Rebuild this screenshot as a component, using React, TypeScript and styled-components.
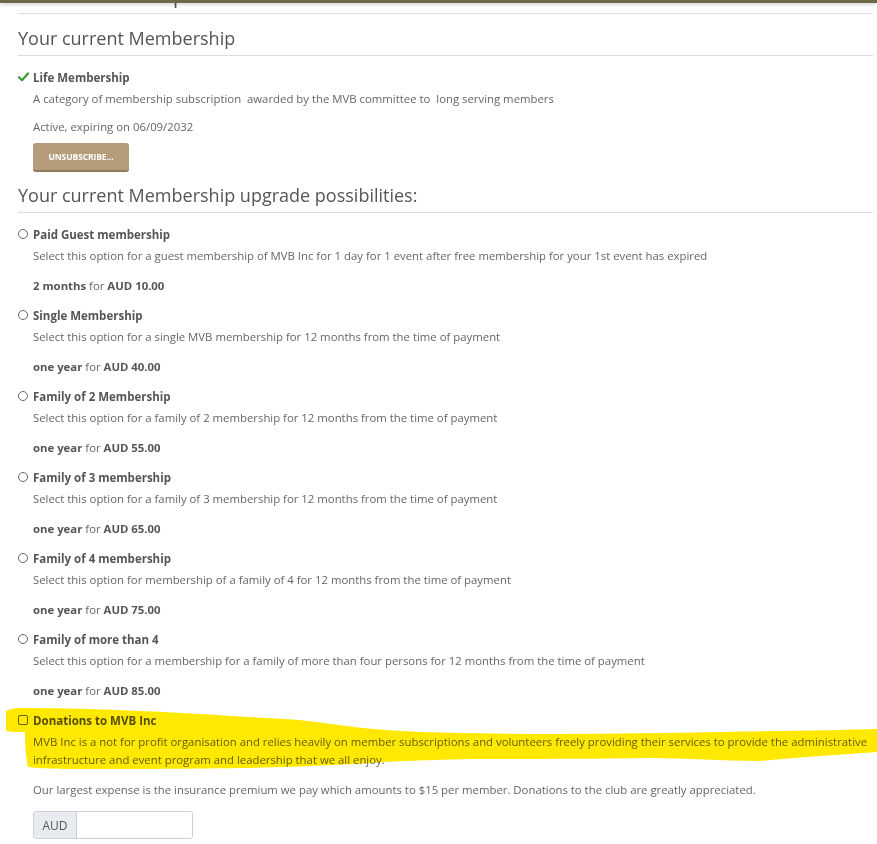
import React from "react";
import styled, { createGlobalStyle } from "styled-components";

const GlobalStyle = createGlobalStyle`
  html, body { margin: 0; padding: 0; background: #fff; }
  body {
    font-family: "Open Sans", "Liberation Sans", sans-serif;
    font-size: 11.37px;
    color: #666;
  }
  * { box-sizing: border-box; }
`;

const TopBar = styled.div`
  position: fixed;
  top: 0;
  left: 0;
  right: 0;
  height: 3px;
  background: #6d6847;
  box-shadow: 0 1px 4px rgba(0, 0, 0, 0.25);
  z-index: 5;
`;

const Page = styled.div`
  padding: 0 4px 20px 18px;
  overflow: hidden;
`;

const CutTitle = styled.h1`
  margin: -14px 0 1px 0;
  height: 28px;
  padding-top: 0;
  font-size: 20px;
  font-weight: 400;
  color: #555;
  line-height: 20px;
  border-bottom: 1px solid #ddd;
`;

const SectionHeading = styled.h2`
  margin: 0;
  padding: 11px 0 5px 0;
  font-size: 18px;
  font-weight: 400;
  line-height: 24px;
  color: #555;
  border-bottom: 1px solid #ddd;
`;

const Block = styled.div`
  position: relative;
  padding-left: 15px;
`;

const TitleRow = styled.div`
  display: flex;
  align-items: center;
  position: relative;
  height: 22px;
  font-weight: 700;
  color: #555;
  font-size: 11.5px;
  z-index: 1;
`;

const Marker = styled.span`
  position: absolute;
  left: -15px;
  top: 50%;
  transform: translateY(-50%);
  display: flex;
  align-items: center;
`;

const Radio = styled.span`
  display: block;
  width: 10px;
  height: 10px;
  border: 1px solid #666;
  border-radius: 50%;
  background: #fff;
`;

const Check = styled.span`
  display: block;
  width: 10px;
  height: 10px;
  border: 1px solid #666;
  border-radius: 2px;
  background: transparent;
`;

const Text = styled.p<{ $gap?: number }>`
  margin: 0 0 ${(p) => p.$gap ?? 0}px 0;
  line-height: 18px;
  padding: 2px 0;
`;

const Price = styled.p`
  margin: 8px 0 0 0;
  line-height: 18px;
  padding: 2px 0;
  b { font-weight: 700; color: #555; }
`;

const CurrentSection = styled.section`
  padding-top: 10px;
`;

const UpgradeList = styled.div`
  display: flex;
  flex-direction: column;
  gap: 7px;
  padding-top: 10px;
`;

const Button = styled.button`
  margin-top: 5px;
  width: 96px;
  height: 29px;
  border: none;
  border-bottom: 2px solid #8f7a5c;
  border-radius: 3px;
  background: #b59c7b;
  color: #fff;
  font-family: "Open Sans", "Liberation Sans", sans-serif;
  font-size: 8.5px;
  font-weight: 700;
  letter-spacing: -0.1px;
  text-transform: uppercase;
  cursor: pointer;
`;

const Donation = styled.div`
  position: relative;
  padding-left: 15px;
`;

const Highlight = styled.svg`
  position: absolute;
  left: -18px;
  top: -10px;
  width: 877px;
  height: 80px;
  mix-blend-mode: multiply;
  pointer-events: none;
  z-index: 2;
`;

const InputGroup = styled.div`
  display: flex;
  width: 160px;
  height: 28px;
  margin-top: 10px;
  border: 1px solid #ccd0d4;
  border-radius: 3px;
  overflow: hidden;
`;

const Addon = styled.span`
  display: flex;
  align-items: center;
  justify-content: center;
  width: 43px;
  background: #e9ecef;
  border-right: 1px solid #ccd0d4;
  color: #555;
  font-size: 12px;
`;

const Field = styled.input`
  flex: 1;
  border: none;
  outline: none;
  min-width: 0;
  font-family: inherit;
`;

const CheckMark = () => (
  <svg width="11" height="10" viewBox="0 0 11 10">
    <path d="M1 5.2 L4 8.2 L10 1.5" fill="none" stroke="#3a9a3a" strokeWidth="2.2" strokeLinecap="round" strokeLinejoin="round" />
  </svg>
);

type Option = { title: string; desc: string; term: string; price: string };

const options: Option[] = [
  {
    title: "Paid Guest membership",
    desc: "Select this option for a guest membership of MVB Inc for 1 day for 1 event after free membership for your 1st event has expired",
    term: "2 months",
    price: "AUD 10.00",
  },
  {
    title: "Single Membership",
    desc: "Select this option for a single MVB membership for 12 months from the time of payment",
    term: "one year",
    price: "AUD 40.00",
  },
  {
    title: "Family of 2 Membership",
    desc: "Select this option for a family of 2 membership for 12 months from the time of payment",
    term: "one year",
    price: "AUD 55.00",
  },
  {
    title: "Family of 3 membership",
    desc: "Select this option for a family of 3 membership for 12 months from the time of payment",
    term: "one year",
    price: "AUD 65.00",
  },
  {
    title: "Family of 4 membership",
    desc: "Select this option for membership of a family of 4 for 12 months from the time of payment",
    term: "one year",
    price: "AUD 75.00",
  },
  {
    title: "Family of more than 4",
    desc: "Select this option for a membership for a family of more than four persons for 12 months from the time of payment",
    term: "one year",
    price: "AUD 85.00",
  },
];

// highlighter stroke, in coordinates where y = page y - 700
const highlightPath =
  "M6 12 C10 10 14 9 20 9 C60 9 100 10 140 12 C190 14 230 17 300 21 C340 26 370 31 420 33 " +
  "C520 36 620 35 720 33 C790 32 840 31 877 30 L877 53 C840 56 800 58 760 62 C720 62 690 59 650 59 " +
  "C580 60 520 60 470 60 C430 61 400 62 385 63 C340 66 300 68 240 69 C180 70 120 70 80 70 " +
  "C50 70 35 69 28 68 C26 60 25 45 25 33 C18 33 10 33 6 32 Z";

export default function App() {
  return (
    <>
      <GlobalStyle />
      <TopBar />
      <Page>
        <CutTitle>Your Memberships</CutTitle>
        <SectionHeading>Your current Membership</SectionHeading>
        <CurrentSection>
          <Block>
            <TitleRow>
              <Marker>
                <CheckMark />
              </Marker>
              Life Membership
            </TitleRow>
            <Text $gap={6}>
              A category of membership subscription&nbsp; awarded by the MVB committee to&nbsp; long serving members
            </Text>
            <Text>Active, expiring on 06/09/2032</Text>
            <Button>Unsubscribe...</Button>
          </Block>
        </CurrentSection>
        <SectionHeading>Your current Membership upgrade possibilities:</SectionHeading>
        <UpgradeList>
          {options.map((o) => (
            <Block key={o.title}>
              <TitleRow>
                <Marker>
                  <Radio />
                </Marker>
                {o.title}
              </TitleRow>
              <Text>{o.desc}</Text>
              <Price>
                <b>{o.term}</b> for <b>{o.price}</b>
              </Price>
            </Block>
          ))}
          <Donation>
            <Highlight viewBox="0 0 877 80" preserveAspectRatio="none">
              <path d={highlightPath} fill="#ffe900" />
            </Highlight>
            <TitleRow>
              <Marker>
                <Check />
              </Marker>
              Donations to MVB Inc
            </TitleRow>
            <Text $gap={8}>
              MVB Inc is a not for profit organisation and relies heavily on member subscriptions and volunteers freely providing their services to provide the administrative infrastructure and event program and leadership that we all enjoy.
            </Text>
            <Text>
              Our largest expense is the insurance premium we pay which amounts to $15 per member. Donations to the club are greatly appreciated.
            </Text>
            <InputGroup>
              <Addon>AUD</Addon>
              <Field type="text" />
            </InputGroup>
          </Donation>
        </UpgradeList>
      </Page>
    </>
  );
}
